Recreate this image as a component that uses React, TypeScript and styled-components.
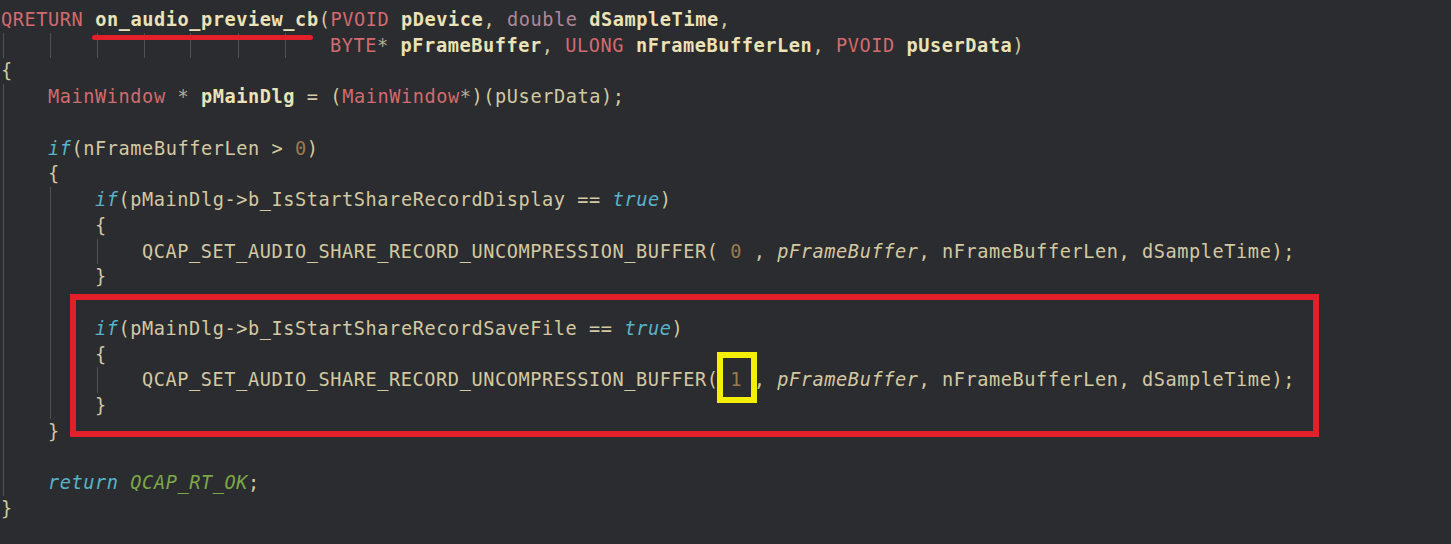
import React from "react";
import styled, { createGlobalStyle, css } from "styled-components";

const GlobalStyle = createGlobalStyle`
  html, body {
    margin: 0;
    padding: 0;
    background: #2b2c2f;
  }
  #root {
    min-height: 544px;
  }
`;

const CHAR = 11.75;
const LINE = 25.74;

type Kind = "plain" | "type" | "kw" | "kw2" | "num" | "const" | "bold" | "ital" | "op";

const Editor = styled.div`
  position: relative;
  width: 1451px;
  height: 544px;
  overflow: hidden;
  background: #2b2c2f;
  box-sizing: border-box;
  padding: 7px 0 0 1px;
  font-family: "DejaVu Sans Mono", "Liberation Mono", monospace;
  font-size: 18.6px;
  letter-spacing: 0.57px;
  color: #d3c9a2;
`;

const Code = styled.div`
  display: flex;
  flex-direction: column;
`;

const Row = styled.div`
  display: flex;
  align-items: stretch;
  height: ${LINE}px;
  line-height: ${LINE}px;
  white-space: pre;
`;

const Indent = styled.span<{ $guide: boolean }>`
  display: inline-block;
  flex: none;
  width: ${CHAR * 4}px;
  height: 100%;
  ${(p) =>
    p.$guide &&
    css`
      background: linear-gradient(
        to right,
        transparent 1.5px,
        #505153 1.5px,
        #505153 2.5px,
        transparent 2.5px
      );
    `}
`;

const kindStyles: Record<Kind, ReturnType<typeof css>> = {
  plain: css`color: #d3c9a2;`,
  type: css`color: #d16b70;`,
  kw: css`color: #58b3c9; font-style: italic;`,
  kw2: css`color: #b0879a;`,
  num: css`color: #9b7b4e;`,
  const: css`color: #7ca747; font-style: italic;`,
  bold: css`color: #ebe2b8; font-weight: bold;`,
  ital: css`color: #d3c9a2; font-style: italic;`,
  op: css`color: #b9b19b;`,
};

const Tok = styled.span<{ $kind: Kind }>`
  ${(p) => kindStyles[p.$kind]}
`;

const FrameBox = styled.div`
  position: absolute;
  left: 70px;
  top: 294px;
  width: 1249px;
  height: 143px;
  box-sizing: border-box;
  border: 6px solid #e3202a;
  pointer-events: none;
`;

const HighlightBox = styled.div`
  position: absolute;
  left: 717px;
  top: 352px;
  width: 40px;
  height: 51px;
  box-sizing: border-box;
  border: 6px solid #f3ef05;
  pointer-events: none;
`;

const Underline = styled.div`
  position: absolute;
  left: 92px;
  top: 35px;
  width: 221px;
  height: 5px;
  border-radius: 3px;
  background: #e3202a;
  pointer-events: none;
`;

type Line = { indent: number; guides: number; tokens: [Kind, string][] };

const QCAP = "QCAP_SET_AUDIO_SHARE_RECORD_UNCOMPRESSION_BUFFER( ";

const lines: Line[] = [
  {
    indent: 0,
    guides: 0,
    tokens: [
      ["type", "QRETURN"],
      ["plain", " "],
      ["bold", "on_audio_preview_cb"],
      ["plain", "("],
      ["type", "PVOID"],
      ["plain", " "],
      ["bold", "pDevice"],
      ["plain", ", "],
      ["kw2", "double"],
      ["plain", " "],
      ["bold", "dSampleTime"],
      ["plain", ","],
    ],
  },
  {
    indent: 7,
    guides: 7,
    tokens: [
      ["type", "BYTE"],
      ["op", "*"],
      ["plain", " "],
      ["bold", "pFrameBuffer"],
      ["plain", ", "],
      ["type", "ULONG"],
      ["plain", " "],
      ["bold", "nFrameBufferLen"],
      ["plain", ", "],
      ["type", "PVOID"],
      ["plain", " "],
      ["bold", "pUserData"],
      ["plain", ")"],
    ],
  },
  { indent: 0, guides: 0, tokens: [["plain", "{"]] },
  {
    indent: 1,
    guides: 1,
    tokens: [
      ["type", "MainWindow"],
      ["plain", " "],
      ["op", "*"],
      ["plain", " "],
      ["bold", "pMainDlg"],
      ["plain", " = ("],
      ["type", "MainWindow"],
      ["op", "*"],
      ["plain", ")(pUserData);"],
    ],
  },
  { indent: 1, guides: 1, tokens: [] },
  {
    indent: 1,
    guides: 1,
    tokens: [
      ["kw", "if"],
      ["plain", "(nFrameBufferLen > "],
      ["num", "0"],
      ["plain", ")"],
    ],
  },
  { indent: 1, guides: 1, tokens: [["plain", "{"]] },
  {
    indent: 2,
    guides: 2,
    tokens: [
      ["kw", "if"],
      ["plain", "(pMainDlg->b_IsStartShareRecordDisplay == "],
      ["kw", "true"],
      ["plain", ")"],
    ],
  },
  { indent: 2, guides: 2, tokens: [["plain", "{"]] },
  {
    indent: 3,
    guides: 3,
    tokens: [
      ["plain", QCAP],
      ["num", "0"],
      ["plain", " , "],
      ["ital", "pFrameBuffer"],
      ["plain", ", nFrameBufferLen, dSampleTime);"],
    ],
  },
  { indent: 2, guides: 2, tokens: [["plain", "}"]] },
  { indent: 2, guides: 2, tokens: [] },
  {
    indent: 2,
    guides: 2,
    tokens: [
      ["kw", "if"],
      ["plain", "(pMainDlg->b_IsStartShareRecordSaveFile == "],
      ["kw", "true"],
      ["plain", ")"],
    ],
  },
  { indent: 2, guides: 2, tokens: [["plain", "{"]] },
  {
    indent: 3,
    guides: 3,
    tokens: [
      ["plain", QCAP],
      ["num", "1"],
      ["plain", " , "],
      ["ital", "pFrameBuffer"],
      ["plain", ", nFrameBufferLen, dSampleTime);"],
    ],
  },
  { indent: 2, guides: 2, tokens: [["plain", "}"]] },
  { indent: 1, guides: 1, tokens: [["plain", "}"]] },
  { indent: 1, guides: 1, tokens: [] },
  {
    indent: 1,
    guides: 1,
    tokens: [
      ["kw", "return"],
      ["plain", " "],
      ["const", "QCAP_RT_OK"],
      ["plain", ";"],
    ],
  },
  { indent: 0, guides: 0, tokens: [["plain", "}"]] },
];

const CodeLine: React.FC<{ line: Line }> = ({ line }) => (
  <Row>
    {Array.from({ length: line.indent }, (_, i) => (
      <Indent key={i} $guide={i < line.guides} />
    ))}
    {line.tokens.map(([kind, text], i) => (
      <Tok key={i} $kind={kind}>
        {text}
      </Tok>
    ))}
  </Row>
);

export default function App() {
  return (
    <>
      <GlobalStyle />
      <Editor>
        <Code>
          {lines.map((l, i) => (
            <CodeLine key={i} line={l} />
          ))}
        </Code>
        <Underline />
        <FrameBox />
        <HighlightBox />
      </Editor>
    </>
  );
}
